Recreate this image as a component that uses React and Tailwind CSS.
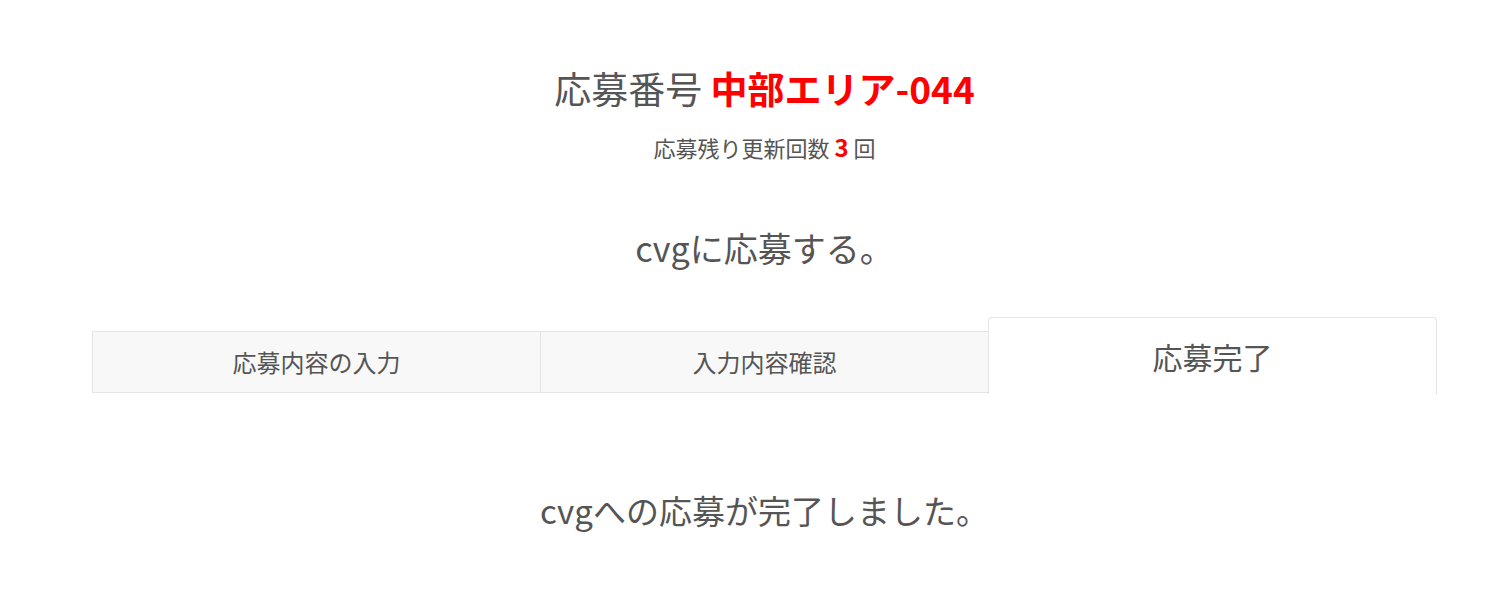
import React from 'react';

const steps = [
    { label: '応募内容の入力', active: false },
    { label: '入力内容確認', active: false },
    { label: '応募完了', active: true },
];

export default function App() {
    return (
        <div
            className="min-h-[603px] bg-white text-[#555] pl-[92px] pr-[58px]"
            style={{ fontFamily: '"Noto Sans CJK JP", "Noto Sans", sans-serif' }}
        >
            <div className="pt-[62px] text-center">
                <h1 className="text-[37px] leading-[52px]">
                    応募番号 <span className="text-[#ff0000] font-bold">中部エリア-044</span>
                </h1>
                <p className="mt-[20px] text-[22px] leading-[26px]">
                    応募残り更新回数 <span className="text-[#ff0000] font-bold text-[24px]">3</span> 回
                </p>
            </div>

            <h2 className="mt-[66px] text-center text-[34px] leading-[44px]">cvgに応募する。</h2>

            <div className="mt-[47px] flex items-end">
                {steps.map((s) =>
                    s.active ? (
                        <div
                            key={s.label}
                            className="flex-1 h-[77px] -mb-px bg-white border border-b-0 border-[#e5e5e5] rounded-t-[4px] flex items-center justify-center text-[30px]"
                        >
                            {s.label}
                        </div>
                    ) : (
                        <div
                            key={s.label}
                            className="flex-1 h-[62px] bg-[#f8f8f8] border border-[#e5e5e5] -mr-px flex items-center justify-center text-[24px]"
                        >
                            {s.label}
                        </div>
                    )
                )}
            </div>

            <p className="mt-[95px] text-center text-[33px] leading-[44px]">cvgへの応募が完了しました。</p>
        </div>
    );
}
